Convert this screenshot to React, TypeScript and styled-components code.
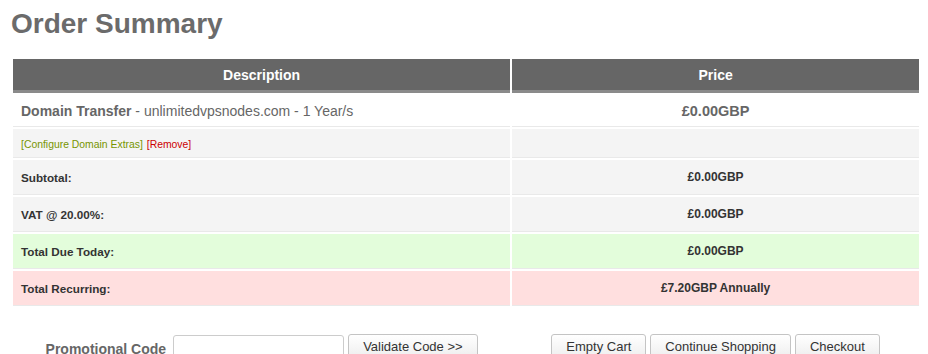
import styled, { createGlobalStyle } from 'styled-components';

const GlobalStyle = createGlobalStyle`
  body {
    margin: 0;
    background: #fff;
    font-family: "Liberation Sans", Arial, sans-serif;
  }
`;

type Tone = 'plain' | 'grey' | 'green' | 'red';

const tones: Record<Tone, string> = {
  plain: '#ffffff',
  grey: '#f4f4f4',
  green: '#e3fddb',
  red: '#ffdfdf',
};

const summary: { label: string; value: string; tone: Tone }[] = [
  { label: 'Subtotal:', value: '£0.00GBP', tone: 'grey' },
  { label: 'VAT @ 20.00%:', value: '£0.00GBP', tone: 'grey' },
  { label: 'Total Due Today:', value: '£0.00GBP', tone: 'green' },
  { label: 'Total Recurring:', value: '£7.20GBP Annually', tone: 'red' },
];

export default function App() {
  return (
    <>
      <GlobalStyle />
      <Page>
        <Title>Order Summary</Title>
        <CartTable>
          <thead>
            <tr>
              <HeadCell $width="55%">Description</HeadCell>
              <HeadCell $width="45%">Price</HeadCell>
            </tr>
          </thead>
          <tbody>
            <Row $tone="plain" $height={31}>
              <Cell>
                <ItemName>Domain Transfer</ItemName> - unlimitedvpsnodes.com - 1 Year/s
              </Cell>
              <PriceCell $big>£0.00GBP</PriceCell>
            </Row>
            <Row $tone="grey" $height={28}>
              <Cell>
                <SmallLink $color="#779500">[Configure Domain Extras]</SmallLink>{' '}
                <SmallLink $color="#cc0000">[Remove]</SmallLink>
              </Cell>
              <PriceCell />
            </Row>
            {summary.map((s) => (
              <Row key={s.label} $tone={s.tone} $height={34}>
                <LabelCell>{s.label}</LabelCell>
                <PriceCell>{s.value}</PriceCell>
              </Row>
            ))}
          </tbody>
        </CartTable>

        <Actions>
          <PromoForm>
            <PromoLabel>Promotional Code</PromoLabel>
            <PromoInput type="text" />
            <Button>Validate Code &gt;&gt;</Button>
          </PromoForm>
          <ButtonGroup>
            <Button>Empty Cart</Button>
            <Button>Continue Shopping</Button>
            <Button>Checkout</Button>
          </ButtonGroup>
        </Actions>
      </Page>
    </>
  );
}

const Page = styled.div`
  width: 910px;
  margin: 0 0 0 11px;
  padding-top: 8px;
`;

const Title = styled.h1`
  margin: 0 0 17px;
  font-size: 28px;
  line-height: 32px;
  font-weight: bold;
  color: #6b6b6b;
`;

const CartTable = styled.table`
  width: 100%;
  table-layout: fixed;
  border-collapse: separate;
  border-spacing: 2px;
`;

const HeadCell = styled.th<{ $width: string }>`
  width: ${(p) => p.$width};
  height: 31px;
  padding: 0;
  background: #666666;
  border-bottom: 3px solid #8a8a8a;
  color: #fff;
  font-size: 14px;
  font-weight: bold;
  text-align: center;
`;

const Row = styled.tr<{ $tone: Tone; $height: number }>`
  td {
    height: ${(p) => p.$height}px;
    background: ${(p) => tones[p.$tone]};
  }
`;

const Cell = styled.td`
  padding: 0 8px;
  border-bottom: 1px solid #e9e9e9;
  color: #666;
  font-size: 14px;
  vertical-align: middle;
`;

const ItemName = styled.strong`
  font-weight: bold;
`;

const SmallLink = styled.span<{ $color: string }>`
  font-size: 10.4px;
  color: ${(p) => p.$color};
`;

const LabelCell = styled(Cell)`
  color: #333;
  font-size: 11.7px;
  font-weight: bold;
`;

const PriceCell = styled(Cell)<{ $big?: boolean }>`
  text-align: center;
  font-weight: bold;
  font-size: ${(p) => (p.$big ? '14.5px' : '12px')};
  color: ${(p) => (p.$big ? '#666' : '#333')};
`;

const Actions = styled.div`
  display: grid;
  grid-template-columns: 55fr 45fr;
  column-gap: 2px;
  padding: 0 2px;
  margin-top: 26px;
`;

const PromoForm = styled.div`
  display: flex;
  align-items: flex-start;
  justify-content: center;
  gap: 4px;
`;

const PromoLabel = styled.span`
  margin: 7px 3px 0 0;
  font-size: 14px;
  font-weight: bold;
  line-height: 16px;
  color: #666;
`;

const PromoInput = styled.input`
  box-sizing: border-box;
  width: 171px;
  height: 28px;
  margin-top: 1px;
  padding: 0 6px;
  border: 1px solid #cccccc;
  border-radius: 3px;
  font-family: inherit;
  font-size: 13px;
  background: #fff;
`;

const ButtonGroup = styled.div`
  display: flex;
  align-items: flex-start;
  justify-content: center;
  gap: 4px;
`;

const Button = styled.button`
  box-sizing: border-box;
  height: 26px;
  padding: 0 14px;
  border: 1px solid #c4c4c4;
  border-radius: 3px;
  background: linear-gradient(#ffffff, #ededed);
  font-family: "Liberation Sans", Arial, sans-serif;
  font-size: 13px;
  line-height: 24px;
  color: #333;
  cursor: pointer;
`;
